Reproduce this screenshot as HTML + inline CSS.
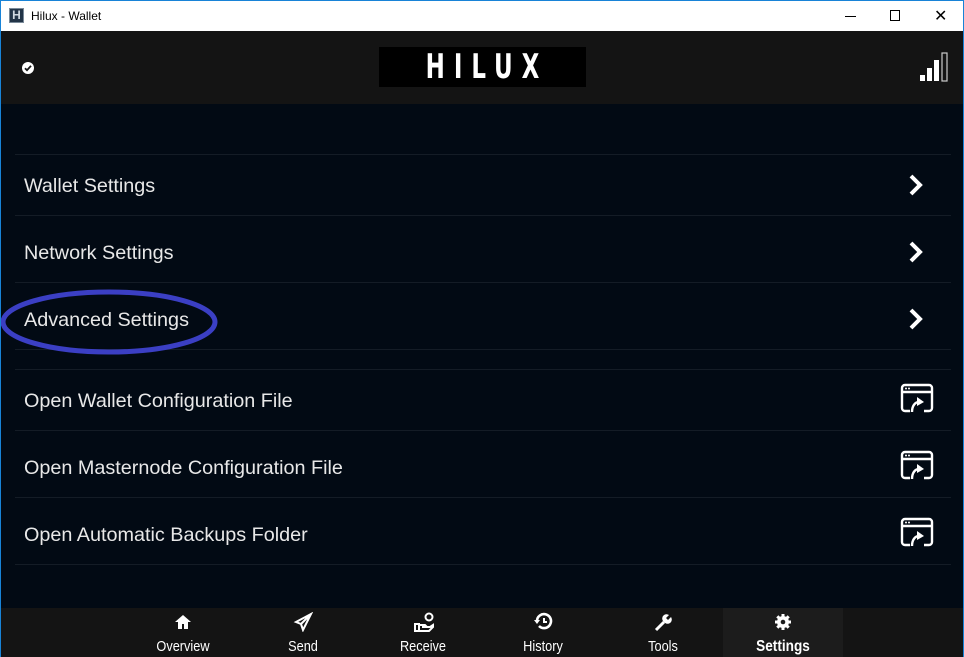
<!DOCTYPE html>
<html><head><style>
*{margin:0;padding:0;box-sizing:border-box}
body{width:964px;height:657px;overflow:hidden;background:#020a14;font-family:"Liberation Sans",sans-serif;position:relative;border:1px solid #1883d7}
.title{position:absolute;left:0;top:0;width:962px;height:30px;background:#fff;color:#000;font-size:12px}
.hdr{position:absolute;left:0;top:30px;width:962px;height:73px;background:#141414}
.logo{position:absolute;left:378px;top:16px;width:207px;height:40px;background:#000;overflow:hidden}
.logo div{position:absolute;left:0;right:0;top:3px;color:#fff;font-weight:bold;font-size:34px;letter-spacing:12px;text-align:center;line-height:34px;font-family:"DejaVu Sans Condensed","Liberation Sans",sans-serif;transform:scaleX(0.75);padding-left:12px}
.sep{position:absolute;left:14px;width:936px;height:1px;background:#141c26}
.row{position:absolute;left:23px;color:#e8e8e8;font-size:19.8px}
.chev{position:absolute;left:905px}
.ic{position:absolute;left:898px}
.nav{position:absolute;left:0;top:607px;width:962px;height:49px;background:#141414}
.tab{position:absolute;top:0;width:120px;height:49px;color:#fff;text-align:center;font-size:15px}
.tab span{position:absolute;left:0;right:0;top:30px;transform:scaleX(0.85)}
.tab svg{position:absolute;left:50px;top:4px}
</style></head><body>
<div class="title">
<div style="position:absolute;left:8px;top:7px;width:15px;height:15px;background:#223447;border:1px solid #7a8a99;color:#cfd8e0;font-size:12px;line-height:13px;text-align:center;font-weight:bold">H</div>
<div style="position:absolute;left:30px;top:8px">Hilux - Wallet</div>
<div style="position:absolute;left:844px;top:15px;width:11px;height:1px;background:#000"></div>
<div style="position:absolute;left:889px;top:9px;width:10px;height:11px;border:1px solid #000"></div>
<div style="position:absolute;left:933px;top:5px;font-size:16px">✕</div>
</div>
<div class="hdr">
<svg style="position:absolute;left:21px;top:31px" width="12" height="12" viewBox="0 0 12 12"><circle cx="6" cy="6" r="6" fill="#fff"/><path d="M3 6.2l2 2 4-4.4" stroke="#141414" stroke-width="1.8" fill="none"/></svg>
<div class="logo"><div>HILUX</div></div>
<svg style="position:absolute;left:919px;top:20px" width="30" height="32" viewBox="0 0 30 32"><rect x="0" y="24" width="5" height="6" fill="#fff"/><rect x="7" y="17" width="5" height="13" fill="#fff"/><rect x="14" y="9" width="5" height="21" fill="#fff"/><rect x="22" y="2" width="5" height="28" fill="none" stroke="#ccc" stroke-width="1.2"/></svg>
</div>
<div class="sep" style="top:153px"></div>
<div class="row" style="top:174px">Wallet Settings</div>
<div class="sep" style="top:214px"></div>
<div class="row" style="top:241px">Network Settings</div>
<div class="sep" style="top:281px"></div>
<div class="row" style="top:308px">Advanced Settings</div>
<div class="sep" style="top:348px"></div>
<div class="sep" style="top:368px"></div>
<div class="row" style="top:389px">Open Wallet Configuration File</div>
<div class="sep" style="top:429px"></div>
<div class="row" style="top:456px">Open Masternode Configuration File</div>
<div class="sep" style="top:496px"></div>
<div class="row" style="top:523px">Open Automatic Backups Folder</div>
<div class="sep" style="top:563px"></div>
<svg class="chev" style="top:172px" width="20" height="24" viewBox="0 0 20 24"><path d="M5 3l9 9-9 9" stroke="#fff" stroke-width="4" fill="none"/></svg>
<svg class="chev" style="top:239px" width="20" height="24" viewBox="0 0 20 24"><path d="M5 3l9 9-9 9" stroke="#fff" stroke-width="4" fill="none"/></svg>
<svg class="chev" style="top:306px" width="20" height="24" viewBox="0 0 20 24"><path d="M5 3l9 9-9 9" stroke="#fff" stroke-width="4" fill="none"/></svg>
<svg class="ic" style="top:382px" width="36" height="32" viewBox="0 0 36 32"><g stroke="#fff" stroke-width="2.4" fill="none"><path d="M11 28H6a3 3 0 0 1-3-3V5a3 3 0 0 1 3-3h24a3 3 0 0 1 3 3v20a3 3 0 0 1-3 3h-5"/><path d="M3 9h30"/><path d="M13 29c0-6 3-10 7-10"/></g><circle cx="7" cy="5.5" r="1" fill="#fff"/><circle cx="10" cy="5.5" r="1" fill="#fff"/><path d="M18 14l7 5-7 4z" fill="#fff"/></svg>
<svg class="ic" style="top:449px" width="36" height="32" viewBox="0 0 36 32"><g stroke="#fff" stroke-width="2.4" fill="none"><path d="M11 28H6a3 3 0 0 1-3-3V5a3 3 0 0 1 3-3h24a3 3 0 0 1 3 3v20a3 3 0 0 1-3 3h-5"/><path d="M3 9h30"/><path d="M13 29c0-6 3-10 7-10"/></g><circle cx="7" cy="5.5" r="1" fill="#fff"/><circle cx="10" cy="5.5" r="1" fill="#fff"/><path d="M18 14l7 5-7 4z" fill="#fff"/></svg>
<svg class="ic" style="top:516px" width="36" height="32" viewBox="0 0 36 32"><g stroke="#fff" stroke-width="2.4" fill="none"><path d="M11 28H6a3 3 0 0 1-3-3V5a3 3 0 0 1 3-3h24a3 3 0 0 1 3 3v20a3 3 0 0 1-3 3h-5"/><path d="M3 9h30"/><path d="M13 29c0-6 3-10 7-10"/></g><circle cx="7" cy="5.5" r="1" fill="#fff"/><circle cx="10" cy="5.5" r="1" fill="#fff"/><path d="M18 14l7 5-7 4z" fill="#fff"/></svg>
<svg style="position:absolute;left:0;top:288px" width="220" height="68" viewBox="0 0 220 68"><ellipse cx="108" cy="33" rx="106" ry="30" stroke="#3b3fc4" stroke-width="5" fill="none"/></svg>
<div class="nav">
<div class="tab" style="left:122px"><svg width="20" height="20" viewBox="0 0 20 20"><path d="M10 3L2 10h3v7h4v-5h2v5h4v-7h3z" fill="#fff"/></svg><span>Overview</span></div>
<div class="tab" style="left:242px"><svg width="20" height="20" viewBox="0 0 20 20"><path d="M18 2L3 10l5 2 2 6zM8 12L18 2" stroke="#fff" stroke-width="2" fill="none"/></svg><span>Send</span></div>
<div class="tab" style="left:362px"><svg width="24" height="22" viewBox="0 0 24 22"><circle cx="16" cy="5" r="3.5" stroke="#fff" stroke-width="2" fill="none"/><path d="M2 12h4v7H2zM6 13h6l2 2h-5M9 15h8l3-2v2l-4 4H6" stroke="#fff" stroke-width="2" fill="none"/></svg><span>Receive</span></div>
<div class="tab" style="left:482px"><svg width="20" height="20" viewBox="0 0 20 20"><path d="M4 9a7 7 0 1 1 2 5" stroke="#fff" stroke-width="2.6" fill="none"/><path d="M1 8l3 4 3-4z" fill="#fff"/><path d="M11 6v4h3" stroke="#fff" stroke-width="2" fill="none"/></svg><span>History</span></div>
<div class="tab" style="left:602px"><svg width="20" height="20" viewBox="0 0 20 20"><path d="M3 18l8-8" stroke="#fff" stroke-width="3"/><path d="M11 10a4 4 0 0 1 5-7l-3 3 2 2 3-3a4 4 0 0 1-7 5" fill="#fff"/></svg><span>Tools</span></div>
<div class="tab" style="left:722px;background:#1c1c1c;font-weight:bold;font-size:16px"><svg width="20" height="20" viewBox="0 0 20 20"><circle cx="10" cy="10" r="6" fill="#fff"/><g stroke="#fff" stroke-width="3"><path d="M10 2v16M2 10h16M4.3 4.3l11.4 11.4M15.7 4.3L4.3 15.7"/></g><circle cx="10" cy="10" r="2.3" fill="#1c1c1c"/></svg><span>Settings</span></div>
</div>
</body></html>
